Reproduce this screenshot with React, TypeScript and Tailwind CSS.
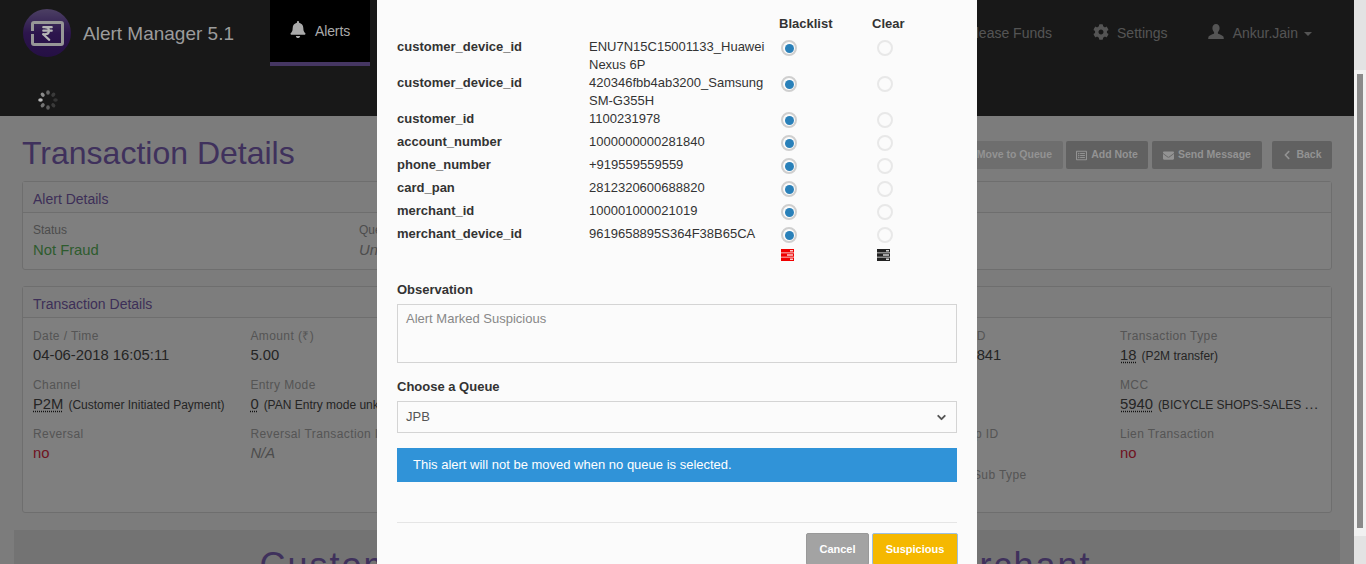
import { FaBell, FaCog, FaChevronLeft, FaEnvelope, FaRegListAlt } from "react-icons/fa";
import { ChevronDown, IndianRupee } from "lucide-react";

const sans = "font-['Liberation_Sans',Arial,sans-serif]";

function Field({ label, children }: { label: string; children?: React.ReactNode }) {
    return (
        <div className="min-w-0">
            <div className="text-[12px] leading-[17px] tracking-[0.4px] text-[#aaa] whitespace-nowrap">{label}</div>
            <div className="text-[14.8px] leading-[21px] text-[#4a4a4a] whitespace-nowrap">{children}</div>
        </div>
    );
}

function Code({ code, text }: { code: string; text: string }) {
    return (
        <div className="truncate w-[202px]">
            <abbr className="underline decoration-dotted decoration-[#222] underline-offset-2">{code}</abbr>
            <span className="text-[12px] ml-[5px]">{text}</span>
        </div>
    );
}

function PageButton({ icon, label, className = "" }: { icon?: React.ReactNode; label: string; className?: string }) {
    return (
        <div className={"h-[28px] flex items-center gap-1 rounded-[2px] font-bold text-[10.5px] " + className}>
            <span className="relative z-20 flex items-center gap-1 text-[#939393]">
                {icon}
                {label}
            </span>
        </div>
    );
}

function Logo() {
    return (
        <div className="w-12 h-12 rounded-full bg-gradient-to-b from-[#9a80c8] via-[#5a2a9a] to-[#4a2088] flex items-center justify-center">
            <div className="relative z-20 w-[33px] h-[25px] rounded-[3px] border-[3px] border-[#979797] flex items-center justify-center">
                <span className="absolute -left-[3px] top-[7px] w-[3px] h-[3px] bg-[#2c1a4e]" />
                <IndianRupee className="w-[17px] h-[17px] text-[#b5b5b5]" strokeWidth={3} />
            </div>
        </div>
    );
}

function Spinner() {
    const dots = [
        { a: 0, o: 0.35 },
        { a: 45, o: 0.15 },
        { a: 90, o: 0.12 },
        { a: 135, o: 0.15 },
        { a: 180, o: 0.3 },
        { a: 225, o: 0.4 },
        { a: 270, o: 0.7 },
        { a: 315, o: 0.5 },
    ];
    return (
        <svg width="22" height="22" viewBox="-11 -11 22 22">
            {dots.map((d) => (
                <ellipse key={d.a} cx="0" cy="-7.5" rx="1.8" ry="2.3" fill="#fff" opacity={d.o} transform={`rotate(${d.a})`} />
            ))}
        </svg>
    );
}

function UserIcon() {
    return (
        <svg width="16" height="16" viewBox="0 0 16 16" className="fill-current">
            <path d="M8 0c2.2 0 3.6 1.7 3.6 4 0 1.7-.7 3.2-1.7 4.2v1.2c.4.6 5.1 1.6 5.6 3.3.2.7.3 1.6.3 2.3H.2c0-.7.1-1.6.3-2.3.5-1.7 5.2-2.7 5.6-3.3V8.2C5.100 7.200 4.400 5.700 4.400 4 4.400 1.700 5.800 0 8 0z" />
        </svg>
    );
}

function StackIcon({ color }: { color: string }) {
    return (
        <svg width="14" height="12" viewBox="0 0 14 12">
            <rect x="0" y="0" width="13" height="3.500" fill={color} />
            <rect x="0" y="4.250" width="13" height="3.500" fill={color} />
            <rect x="0" y="8.500" width="13" height="3.500" fill={color} />
            <rect x="9" y="1.200" width="3" height="1.200" fill="#fff" />
            <rect x="6" y="5.400" width="6" height="1.200" fill="#fff" />
            <rect x="9" y="9.600" width="3" height="1.200" fill="#fff" />
        </svg>
    );
}

function Radio({ checked }: { checked?: boolean }) {
    return (
        <div className={"w-4 h-4 rounded-full border-2 flex items-center justify-center " + (checked ? "border-[#cfcfcf]" : "border-[#e8e8e8]")}>
            {checked && <div className="w-[9px] h-[9px] rounded-full bg-[#2980b9]" />}
        </div>
    );
}

const rows = [
    { name: "customer_device_id", value: "ENU7N15C15001133_Huawei Nexus 6P", tall: true },
    { name: "customer_device_id", value: "420346fbb4ab3200_Samsung SM-G355H", tall: true },
    { name: "customer_id", value: "1100231978" },
    { name: "account_number", value: "1000000000281840" },
    { name: "phone_number", value: "+919559559559" },
    { name: "card_pan", value: "2812320600688820" },
    { name: "merchant_id", value: "100001000021019" },
    { name: "merchant_device_id", value: "9619658895S364F38B65CA" },
];

function Page() {
    return (
        <div className="bg-[#f8f8f8] h-full">
            <nav className="bg-[#303030] h-[116px] text-[#a8a8a8] text-[14px]">
                <div className="h-[66px] flex">
                    <div className="w-[270px] flex items-start pl-[23px] pt-[9px] gap-3">
                        <Logo />
                        <span className="relative z-20 text-[19px] leading-[50px] text-[#9c9c9c] whitespace-nowrap">Alert Manager 5.1</span>
                    </div>
                    <div className="w-[100px] h-[66px] bg-black border-b-4 border-[#8a6cc4] flex items-start justify-center gap-[9px] pt-[21px]">
                        <span className="relative z-20 flex gap-[9px] text-[#aaa]">
                            <FaBell className="w-4 h-[17px]" />
                            <span className="leading-[21px] tracking-[-0.1px]">Alerts</span>
                        </span>
                    </div>
                    <div className="flex-1 flex items-start justify-end pr-[42px] pt-[23px] leading-5">
                        <span className="mr-[41px]">Release Funds</span>
                        <FaCog className="w-4 h-4 mt-[1px] mr-2" />
                        <span className="mr-[40px]">Settings</span>
                        <span className="mr-[9px] mt-[1px]"><UserIcon /></span>
                        <span>Ankur.Jain</span>
                        <span className="ml-[6px] mt-[9px] border-x-4 border-x-transparent border-t-4 border-t-[#a8a8a8]" />
                    </div>
                </div>
                <div className="pl-[37px] pt-[23px]">
                    <span className="relative z-20 block w-[22px]"><Spinner /></span>
                </div>
            </nav>

            <div className="px-[22px]">
                <div className="h-[65px] flex justify-between items-start">
                    <h1 className="text-[32px] leading-[74px] text-[#7f62b8]">Transaction Details</h1>
                    <div className="flex pt-[25px]">
                        <PageButton label="Move to Queue" className="w-[100px] mr-[3px] justify-end pr-[11px] bg-[#dcdcdc]" />
                        <PageButton icon={<FaRegListAlt className="w-[11px] h-[11px]" />} label="Add Note" className="w-[82px] mr-1 justify-center bg-[#c2c2c2]" />
                        <PageButton icon={<FaEnvelope className="w-[11px] h-[11px]" />} label="Send Message" className="w-[110px] mr-[10px] justify-center bg-[#c2c2c2]" />
                        <PageButton icon={<FaChevronLeft className="w-[10px] h-[10px]" />} label="Back" className="w-[60px] justify-center bg-[#c2c2c2]" />
                    </div>
                </div>

                <section className="h-[89px] bg-white border border-[#ddd] rounded-[3px]">
                    <div className="h-[31px] bg-[#fafafa] border-b border-[#ddd] px-[10px] text-[14px] leading-[34px] text-[#7a5fb0]">Alert Details</div>
                    <div className="grid grid-cols-[326px_327px] pl-[10px] pt-[9px]">
                        <div>
                            <div className="text-[12px] leading-[17px] text-[#999]">Status</div>
                            <div className="text-[14.8px] leading-[23px] text-[#5cb85c]">Not Fraud</div>
                        </div>
                        <div>
                            <div className="text-[12px] leading-[17px] text-[#999]">Queue</div>
                            <div className="text-[14.8px] leading-[23px] italic text-[#999]">Unassigned</div>
                        </div>
                    </div>
                </section>

                <section className="mt-[16px] h-[227px] bg-white border border-[#ddd] rounded-[3px]">
                    <div className="h-[31px] bg-[#fafafa] border-b border-[#ddd] px-[10px] text-[14px] leading-[34px] text-[#7a5fb0]">Transaction Details</div>
                    <div className="grid grid-cols-[repeat(6,217.4px)] auto-rows-[49px] pl-[10px] pt-[10px]">
                        <Field label="Date / Time">04-06-2018 16:05:11</Field>
                        <Field label="Amount (₹)">5.00</Field>
                        <div />
                        <div />
                        <Field label="Transaction ID">100000000841</Field>
                        <Field label="Transaction Type"><Code code="18" text="(P2M transfer)" /></Field>

                        <Field label="Channel"><Code code="P2M" text="(Customer Initiated Payment)" /></Field>
                        <Field label="Entry Mode"><Code code="0" text="(PAN Entry mode unknown)" /></Field>
                        <div />
                        <div />
                        <div />
                        <Field label="MCC"><Code code="5940" text="(BICYCLE SHOPS-SALES AND SERVICE)" /></Field>

                        <Field label="Reversal"><span className="text-[#dd2a44]">no</span></Field>
                        <Field label="Reversal Transaction ID"><span className="italic text-[#999]">N/A</span></Field>
                        <div />
                        <div />
                        <Field label="Branch Group ID" />
                        <Field label="Lien Transaction"><span className="text-[#dd2a44]">no</span></Field>

                        <div className="col-start-5 -mt-2 text-[12px] leading-[17px] tracking-[0.4px] text-[#aaa] whitespace-nowrap">Transaction Sub Type</div>
                    </div>
                </section>
            </div>

            <div className="mx-[14px] mt-[17px] h-[60px] bg-[#e6e6e6] grid grid-cols-2 text-center text-[36px] tracking-[2px] leading-[72px] text-[#7f62b8]">
                <div>Customer</div>
                <div>Merchant</div>
            </div>
        </div>
    );
}

function Modal() {
    return (
        <div className="w-[600px] h-[564px] bg-[#fbfbfb] px-5 text-[13px] text-[#333] overflow-hidden">
            <div className="h-[38px] font-bold">
                <div className="grid grid-cols-[382px_93px_auto] pt-[15px] leading-[18px]">
                    <span />
                    <span>Blacklist</span>
                    <span>Clear</span>
                </div>
            </div>
            {rows.map((r, i) => (
                <div key={i} className={"grid grid-cols-[192px_190px_96px_auto] leading-[18px] " + (r.tall ? "h-[36px]" : "h-[23px]")}>
                    <span className="font-bold">{r.name}</span>
                    <span className="pr-[10px]">{r.value}</span>
                    <div className="pl-[2px] pt-[2px]"><Radio checked /></div>
                    <div className="pl-[2px] pt-[2px]"><Radio /></div>
                </div>
            ))}
            <div className="grid grid-cols-[384px_96px_auto] pt-[1px] h-[26px]">
                <span />
                <StackIcon color="#f00000" />
                <StackIcon color="#222" />
            </div>

            <label className="block font-bold mt-[7px] leading-[18px]">Observation</label>
            <div className="mt-[5px] h-[59px] border border-[#d4d4d4] px-2 py-[5px] text-[#888] leading-[18px]">Alert Marked Suspicious</div>

            <label className="block font-bold mt-[15px] leading-[18px]">Choose a Queue</label>
            <div className="mt-[5px] h-[32px] border border-[#d4d4d4] pl-2 pr-[8px] flex items-center justify-between text-[#555] text-[13px]">
                JPB
                <ChevronDown className="w-[13px] h-[13px] text-[#555]" strokeWidth={3.5} />
            </div>

            <div className="mt-[15px] h-[34px] bg-[#3093d8] text-white pl-4 flex items-center text-[13px]">This alert will not be moved when no queue is selected.</div>

            <div className="mt-[40px] border-t border-[#e5e5e5] pt-[10px] flex justify-end gap-[3px] font-bold text-[11px] text-white">
                <div className="w-[63px] h-[32px] bg-[#a3a3a3] border border-[#999] rounded-[2px] flex items-center justify-center">Cancel</div>
                <div className="w-[86px] h-[32px] -mr-[1px] bg-[#f5b800] border border-[#9dbfe0] rounded-[2px] flex items-center justify-center">Suspicious</div>
            </div>
        </div>
    );
}

export default function App() {
    return (
        <div className={"w-[1366px] h-[564px] overflow-hidden flex " + sans}>
            <div className="relative w-[1354px] h-full overflow-hidden">
                <Page />
                <div className="absolute inset-0 z-10 bg-black/50 flex justify-center">
                    <Modal />
                </div>
            </div>
            <div className="w-3 flex flex-col bg-[#f1f1f1]">
                <div className="h-[70px] bg-[#e3e3e3]" />
                <div className="mt-1 ml-[3px] w-[6px] h-[454px] bg-[#8a8a8a]" />
                <div className="flex-1 mt-2 bg-[#e3e3e3]" />
            </div>
        </div>
    );
}
